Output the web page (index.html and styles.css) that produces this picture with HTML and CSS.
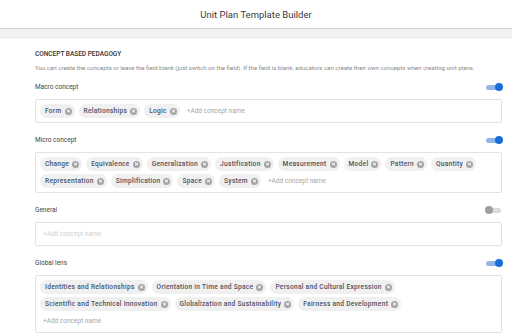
FILE: index.html
```html
<!DOCTYPE html>
<html lang="en">
<head>
  <meta charset="UTF-8" />
  <meta name="viewport" content="width=device-width, initial-scale=1.0"/>
  <title>Unit Plan Template Builder</title>
  <link rel="stylesheet" href="styles.css">
</head>
<body>

  <header class="topbar">Unit Plan Template Builder</header>
  <div class="strip"></div>

  <div class="section">
    <h2>Concept based pedagogy</h2>
    <p class="desc">You can create the concepts or leave the field blank (just switch on the field). If the field is blank, educators can create their own concepts when creating unit plans.</p>

    <div class="field">
      <div class="field-head">
        <label>Macro concept</label>
        <span class="toggle on"><span class="knob"></span></span>
      </div>
      <div class="box">
        <span class="chip">Form<i class="x"></i></span>
        <span class="chip">Relationships<i class="x"></i></span>
        <span class="chip">Logic<i class="x"></i></span>
        <input type="text" placeholder="+Add concept name" />
      </div>
    </div>

    <div class="field">
      <div class="field-head">
        <label>Micro concept</label>
        <span class="toggle on"><span class="knob"></span></span>
      </div>
      <div class="box">
        <span class="chip">Change<i class="x"></i></span>
        <span class="chip">Equivalence<i class="x"></i></span>
        <span class="chip">Generalization<i class="x"></i></span>
        <span class="chip">Justification<i class="x"></i></span>
        <span class="chip">Measurement<i class="x"></i></span>
        <span class="chip">Model<i class="x"></i></span>
        <span class="chip">Pattern<i class="x"></i></span>
        <span class="chip">Quantity<i class="x"></i></span>
        <span class="chip">Representation<i class="x"></i></span>
        <span class="chip">Simplification<i class="x"></i></span>
        <span class="chip">Space<i class="x"></i></span>
        <span class="chip">System<i class="x"></i></span>
        <input type="text" placeholder="+Add concept name" />
      </div>
    </div>

    <div class="field">
      <div class="field-head">
        <label>General</label>
        <span class="toggle"><span class="knob"></span></span>
      </div>
      <div class="box">
        <input type="text" class="faint" placeholder="+Add concept name" />
      </div>
    </div>

    <div class="field">
      <div class="field-head">
        <label>Global lens</label>
        <span class="toggle on"><span class="knob"></span></span>
      </div>
      <div class="box">
        <span class="chip">Identities and Relationships<i class="x"></i></span>
        <span class="chip">Orientation in Time and Space<i class="x"></i></span>
        <span class="chip">Personal and Cultural Expression<i class="x"></i></span>
        <span class="chip">Scientific and Technical Innovation<i class="x"></i></span>
        <span class="chip">Globalization and Sustainability<i class="x"></i></span>
        <span class="chip">Fairness and Development<i class="x"></i></span>
        <input type="text" placeholder="+Add concept name" />
      </div>
    </div>
  </div>

</body>
</html>
```

FILE: styles.css
```css
body {
  font-family: Roboto, 'Liberation Sans', sans-serif;
  background: white;
  margin: 0;
  color: #333;
  overflow: hidden;
}

.topbar {
  height: 28px;
  line-height: 30px;
  text-align: center;
  font-size: 9.5px;
  color: #3a3a3a;
  border-bottom: 1px solid #d4d4d4;
  box-shadow: 0 1px 2px rgba(0, 0, 0, 0.08);
}

.strip {
  height: 8px;
  background: #f2f2f2;
  border-bottom: 1px solid #e8e8e8;
}

.section {
  padding: 12px 10px 0 35px;
}

h2 {
  margin: 0;
  font-size: 6.5px;
  line-height: 9px;
  font-weight: 500;
  text-transform: uppercase;
  color: #333;
}

.desc {
  margin: 4px 0 0;
  font-size: 6.1px;
  line-height: 9px;
  color: #8a8a8a;
}

.field {
  margin-top: 11px;
}

.field:first-of-type {
  margin-top: 9px;
}

.field-head {
  display: flex;
  justify-content: space-between;
  align-items: center;
  height: 12px;
  margin-bottom: 6px;
}

label {
  font-size: 6.5px;
  color: #444;
}

.toggle {
  display: flex;
  align-items: center;
  width: 15px;
  height: 5px;
  margin-right: 1px;
  border-radius: 3px;
  background: #dadada;
}

.toggle .knob {
  width: 8px;
  height: 8px;
  margin-left: -1px;
  border-radius: 50%;
  background: #9e9e9e;
}

.toggle.on {
  justify-content: flex-end;
  background: #93b6ea;
}

.toggle.on .knob {
  margin-left: 0;
  margin-right: -2px;
  background: #1a6ed8;
}

.box {
  display: flex;
  flex-wrap: wrap;
  gap: 3px 4px;
  padding: 4px;
  border: 1px solid #e2e2e2;
  border-radius: 2px;
}

.chip {
  display: flex;
  align-items: center;
  gap: 3px;
  height: 14px;
  padding: 0 3px 0 5px;
  border-radius: 7px;
  background: #f0f0f0;
  font-size: 6.6px;
  font-weight: 500;
  letter-spacing: 0.28px;
  color: #4d5262;
}

.x {
  position: relative;
  width: 7px;
  height: 7px;
  border-radius: 50%;
  background: #a3a3a3;
}

.x::before, .x::after {
  content: "";
  position: absolute;
  left: 3px;
  top: 1.5px;
  width: 1px;
  height: 4px;
  background: #f0f0f0;
  transform: rotate(45deg);
}

.x::after {
  transform: rotate(-45deg);
}

input {
  flex: 1;
  min-width: 110px;
  height: 14px;
  padding: 0 0 0 3px;
  border: none;
  outline: none;
  font-family: inherit;
  font-size: 6.5px;
  background: transparent;
}

input::placeholder {
  color: #a6a6a6;
}

input.faint::placeholder {
  color: #d0d0d0;
}
```
